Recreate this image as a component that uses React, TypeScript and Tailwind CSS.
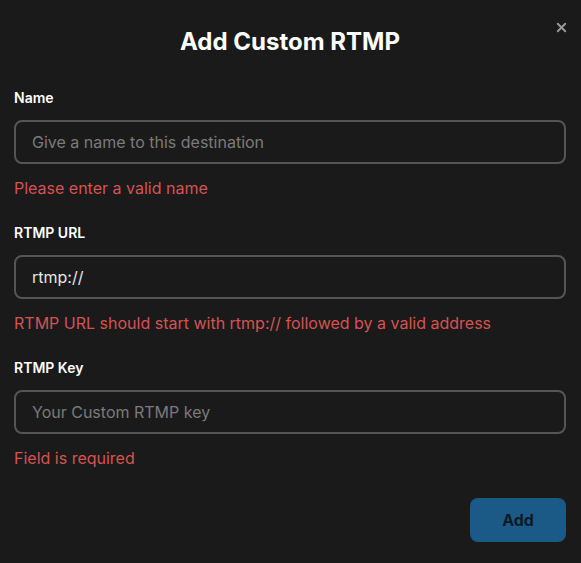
import { X } from "lucide-react";

function Field({ label, placeholder, value, error }: { label: string; placeholder?: string; value?: string; error: string }) {
  return (
    <div className="flex flex-col">
      <label className="text-[14px] font-semibold leading-5 text-white">{label}</label>
      <input
        readOnly
        defaultValue={value}
        placeholder={placeholder}
        className="mt-3 h-[44px] w-full rounded-lg border-2 border-[#555555] bg-transparent px-4 text-[16px] text-[#e6e6e6] placeholder:text-[#7a7a7a] outline-none"
      />
      <p className="mt-[12px] text-[16px] leading-6 text-[#d65252]">{error}</p>
    </div>
  );
}

export default function App() {
  return (
    <div className="relative h-[563px] w-[581px] bg-[#1a1a1a] pl-[14px] pr-[15px] pt-[28px] font-['Inter',sans-serif]">
      <button className="absolute right-[12px] top-[20px] text-[#9a9a9a]" aria-label="Close">
        <X className="h-[15px] w-[15px]" strokeWidth={3} />
      </button>
      <h1 className="text-center text-[24px] font-bold leading-7 text-white">Add Custom RTMP</h1>
      <div className="mt-[32px] flex flex-col gap-[23px]">
        <Field label="Name" placeholder="Give a name to this destination" error="Please enter a valid name" />
        <Field label="RTMP URL" value="rtmp://" error="RTMP URL should start with rtmp:// followed by a valid address" />
        <Field label="RTMP Key" placeholder="Your Custom RTMP key" error="Field is required" />
      </div>
      <div className="mt-[28px] flex justify-end">
        <button className="h-[44px] w-[96px] rounded-lg bg-[#1b5a86] text-[16px] font-bold text-[#0d1a24]">Add</button>
      </div>
    </div>
  );
}
